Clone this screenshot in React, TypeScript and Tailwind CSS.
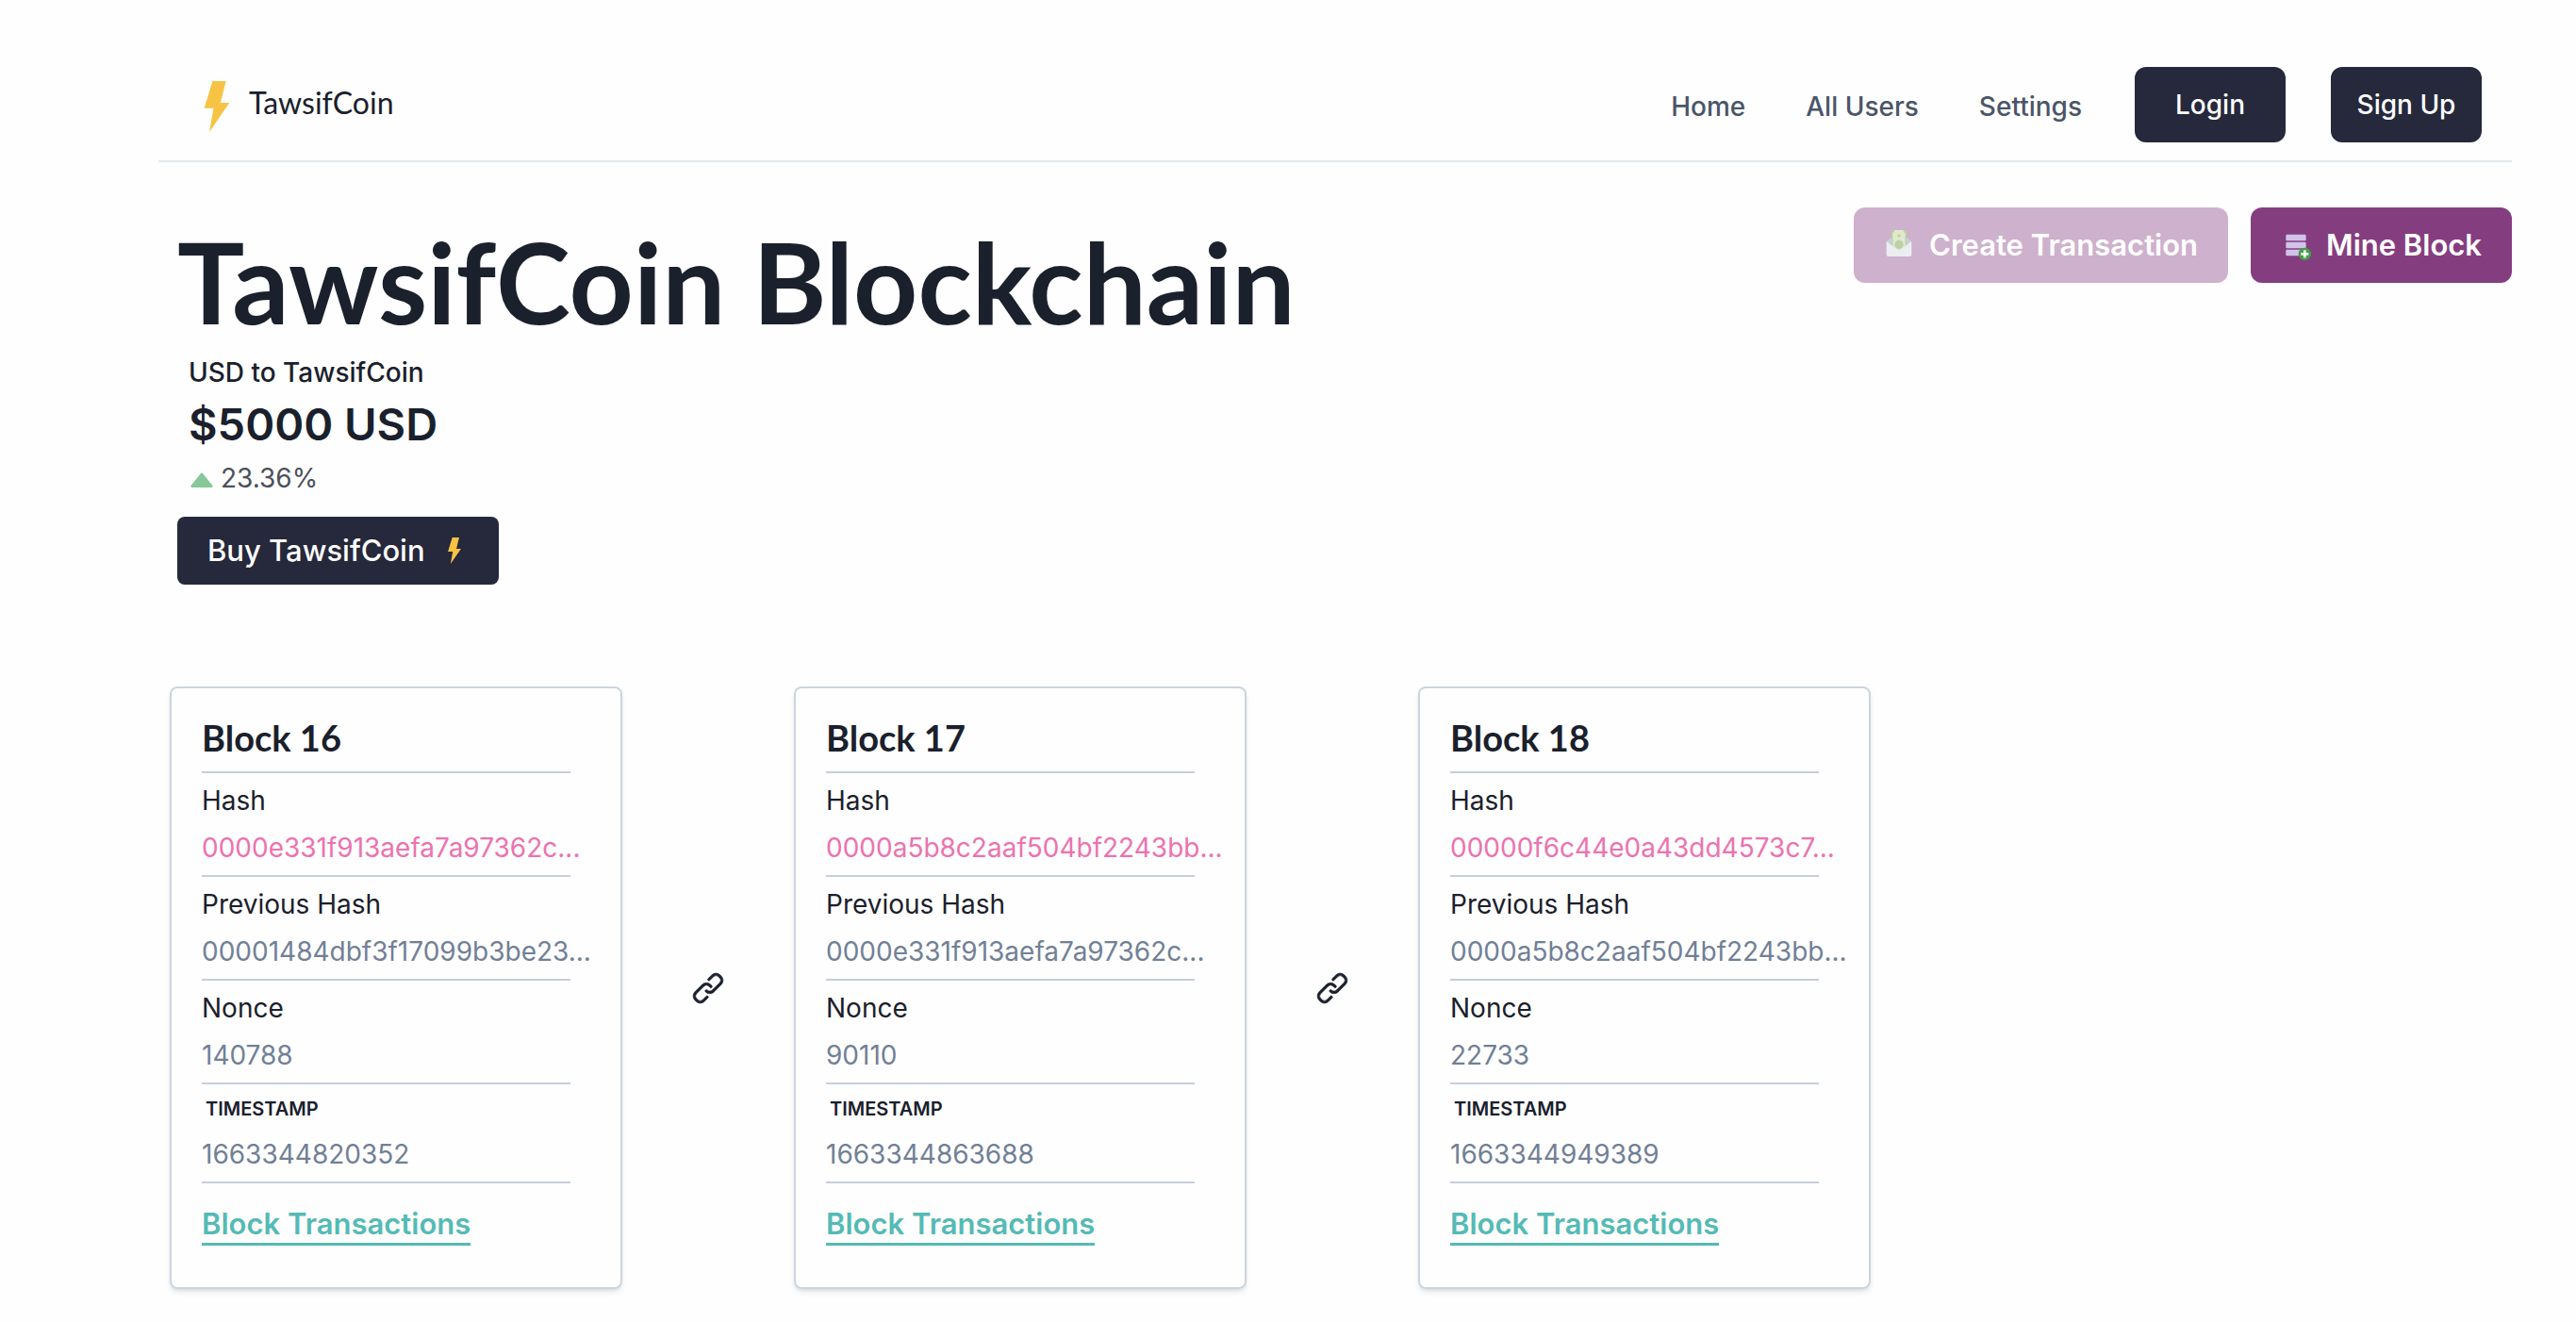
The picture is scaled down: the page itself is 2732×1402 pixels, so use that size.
import { FcAddDatabase } from "react-icons/fc";

type Block = {
  id: number;
  hash: string;
  previousHash: string;
  nonce: string;
  timestamp: string;
};

const blocks: Block[] = [
  {
    id: 16,
    hash: "0000e331f913aefa7a97362c...",
    previousHash: "00001484dbf3f17099b3be23...",
    nonce: "140788",
    timestamp: "1663344820352",
  },
  {
    id: 17,
    hash: "0000a5b8c2aaf504bf2243bb...",
    previousHash: "0000e331f913aefa7a97362c...",
    nonce: "90110",
    timestamp: "1663344863688",
  },
  {
    id: 18,
    hash: "00000f6c44e0a43dd4573c7...",
    previousHash: "0000a5b8c2aaf504bf2243bb...",
    nonce: "22733",
    timestamp: "1663344949389",
  },
];

function Bolt({ className }: { className: string }) {
  return (
    <svg viewBox="0 0 79 160" className={className} aria-hidden="true">
      <path fill="#f6c344" d="M26 0H68L51 68H79L16 160L29 85H0Z" />
    </svg>
  );
}

function MoneyEnvelope() {
  return (
    <svg viewBox="0 0 48 48" className="size-8" aria-hidden="true">
      <path fill="#c8d0d9" d="M4 18L13 11H35L44 18L40 30H8Z" />
      <path fill="#dfe9cb" d="M12 0H36V27L24 36L12 27Z" />
      <path fill="#bdcfa9" d="M12 0H17A5 5 0 0 1 12 5ZM36 0H31A5 5 0 0 0 36 5ZM12 0H14V29L12 27ZM36 0H34V29L36 27Z" />
      <circle cx="24" cy="9" r="2.5" fill="#bdcfa9" />
      <circle cx="24" cy="23" r="7" fill="#bdcfa9" />
      <path fill="#ecedf0" d="M4 18L24 33L44 18V39A3 3 0 0 1 41 42H7A3 3 0 0 1 4 39Z" />
    </svg>
  );
}

function ChainLink() {
  return (
    <svg viewBox="0 0 24 24" className="size-8 overflow-visible" fill="#1a202c" stroke="#1a202c" strokeWidth="0.5" aria-hidden="true">
      <path d="M10.458,18.374,7.721,21.11a2.853,2.853,0,0,1-3.942,0l-.892-.891a2.787,2.787,0,0,1,0-3.941l5.8-5.8a2.789,2.789,0,0,1,3.942,0l.893.892A1,1,0,0,0,14.94,9.952l-.893-.892a4.791,4.791,0,0,0-6.771,0l-5.8,5.8a4.787,4.787,0,0,0,0,6.77l.892.891a4.785,4.785,0,0,0,6.771,0l2.736-2.735a1,1,0,1,0-1.414-1.415Z" />
      <path d="M22.526,2.363l-.892-.892a4.8,4.8,0,0,0-6.77,0l-2.905,2.9a1,1,0,0,0,1.414,1.414l2.9-2.9a2.79,2.79,0,0,1,3.941,0l.893.893a2.786,2.786,0,0,1,0,3.942l-5.8,5.8a2.769,2.769,0,0,1-1.971.817h0a2.766,2.766,0,0,1-1.969-.816,1,1,0,1,0-1.415,1.412,4.751,4.751,0,0,0,3.384,1.4h0a4.752,4.752,0,0,0,3.385-1.4l5.8-5.8a4.786,4.786,0,0,0,0-6.771Z" />
    </svg>
  );
}

function Field({ label, value, tone, compact }: { label: string; value: string; tone: string; compact?: boolean }) {
  return (
    <div className="flex w-[95%] flex-col gap-2 border-b-2 border-[#c7cddb] py-2">
      <dt className={compact ? "pl-1 text-[20px] leading-[37px] font-semibold" : "text-[28px] leading-[42px]"}>{label}</dt>
      <dd className={`text-[28px] leading-[42px] whitespace-nowrap ${tone}`}>{value}</dd>
    </div>
  );
}

function BlockCard({ block }: { block: Block }) {
  return (
    <article className="w-[480px] shrink-0 rounded-lg border-2 border-[#cbd5e0] px-8 pt-7 pb-11 shadow-md">
      <h2 className="w-[95%] border-b-2 border-[#c7cddb] pb-3 font-[Lato] text-[38px] leading-[48px] font-bold">
        Block {block.id}
      </h2>
      <dl>
        <Field label="Hash" value={block.hash} tone="text-[#ed72b0]" />
        <Field label="Previous Hash" value={block.previousHash} tone="text-[#718096]" />
        <Field label="Nonce" value={block.nonce} tone="text-[#718096]" />
        <Field label="TIMESTAMP" value={block.timestamp} tone="text-[#718096]" compact />
      </dl>
      <a href="#transactions" className="mt-[23px] block w-fit border-b-[3px] border-[#55bab5] text-[31px] leading-[40px] font-semibold text-[#55bab5]">
        Block Transactions
      </a>
    </article>
  );
}

const headerButton = "h-20 w-40 rounded-xl bg-[#26283b] text-[28px] font-medium text-white";

export default function App() {
  return (
    <div className="min-h-screen bg-[#fefefe] pr-[68px] pb-8 pl-[168px] font-[Inter,sans-serif] text-[#1a202c]">
      <header className="flex items-center justify-between border-b-2 border-[#e2e8ec] pt-[71px] pr-8 pb-[19px]">
        <a href="#top" className="flex items-center gap-5 pt-1 pl-12">
          <Bolt className="h-[54px] w-[28px]" />
          <span className="pb-2 font-[Lato] text-[32px] leading-[40px]">TawsifCoin</span>
        </a>
        <nav className="flex items-center text-[28px] font-medium text-[#4a5568]">
          <div className="flex gap-16 pt-1 pr-14">
            <a href="#home">Home</a>
            <a href="#users">All Users</a>
            <a href="#settings">Settings</a>
          </div>
          <div className="flex gap-12">
            <button type="button" className={headerButton}>Login</button>
            <button type="button" className={headerButton}>Sign Up</button>
          </div>
        </nav>
      </header>

      <main>
        <section className="flex items-start justify-between pt-12">
          <div className="pl-5">
            <h1 className="font-[Lato] text-[119px] leading-[156px] font-bold">TawsifCoin Blockchain</h1>
            <dl className="pl-3">
              <dt className="text-[28px] leading-[38px] font-medium">USD to TawsifCoin</dt>
              <dd className="text-[47px] leading-[72px] font-semibold">$5000 USD</dd>
              <dd className="flex items-center gap-2 text-[28px] leading-[42px] text-[#4b505b]">
                <svg viewBox="0 0 24 16" className="mt-1 ml-0.5 h-4 w-6" role="img" aria-label="increased by">
                  <path fill="#87c798" d="M11 1Q12 0 13 1L23.5 14Q24 16 22 16H2Q0 16 .5 14Z" />
                </svg>
                23.36%
              </dd>
            </dl>
            <button type="button" className="mt-5 flex h-[72px] items-center gap-6 rounded-lg bg-[#26283b] pr-10 pl-8 text-[31px] font-medium text-white">
              Buy TawsifCoin
              <Bolt className="h-7 w-[14px]" />
            </button>
          </div>
          <div className="flex gap-6 text-[31px] font-semibold text-white">
            <button type="button" disabled className="flex h-20 items-center gap-4 rounded-xl bg-[#ceb1cc] px-8">
              <MoneyEnvelope />
              Create Transaction
            </button>
            <button type="button" className="flex h-20 items-center gap-4 rounded-xl bg-[#843e80] px-8">
              <FcAddDatabase className="size-8" aria-hidden="true" />
              Mine Block
            </button>
          </div>
        </section>

        <section className="mt-[108px] flex items-center pl-3">
          {blocks.map((block, index) => (
            <div key={block.id} className="flex items-center">
              <BlockCard block={block} />
              {index < blocks.length - 1 && (
                <div className="flex w-[182px] justify-center">
                  <ChainLink />
                </div>
              )}
            </div>
          ))}
        </section>
      </main>
    </div>
  );
}
